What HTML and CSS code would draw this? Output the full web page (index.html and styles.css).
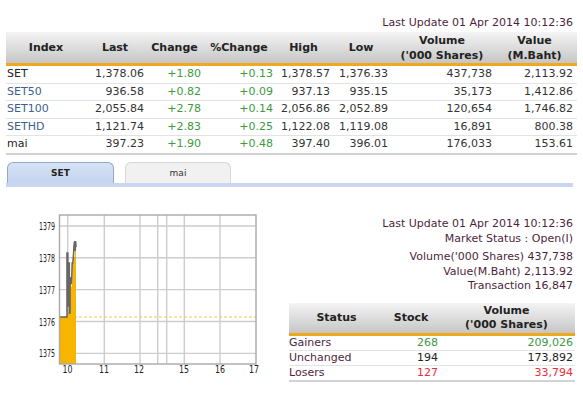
FILE: index.html
```html
<!DOCTYPE html>
<html>
<head>
<meta charset="utf-8">
<link rel="stylesheet" href="styles.css">
</head>
<body>
<div class="page">
  <div class="top">
    <div class="update">Last Update 01 Apr 2014 10:12:36</div>
    <table class="idx">
      <colgroup>
        <col class="c-index"><col class="c-last"><col class="c-chg"><col class="c-pchg"><col class="c-high"><col class="c-low"><col class="c-vol"><col class="c-val">
      </colgroup>
      <thead>
        <tr>
          <th>Index</th><th>Last</th><th>Change</th><th>%Change</th><th>High</th><th>Low</th><th>Volume<br>('000 Shares)</th><th>Value<br>(M.Baht)</th>
        </tr>
      </thead>
      <tbody>
        <tr><td class="name">SET</td><td>1,378.06</td><td class="up">+1.80</td><td class="up">+0.13</td><td>1,378.57</td><td>1,376.33</td><td>437,738</td><td>2,113.92</td></tr>
        <tr><td class="name link">SET50</td><td>936.58</td><td class="up">+0.82</td><td class="up">+0.09</td><td>937.13</td><td>935.15</td><td>35,173</td><td>1,412.86</td></tr>
        <tr><td class="name link">SET100</td><td>2,055.84</td><td class="up">+2.78</td><td class="up">+0.14</td><td>2,056.86</td><td>2,052.89</td><td>120,654</td><td>1,746.82</td></tr>
        <tr><td class="name link">SETHD</td><td>1,121.74</td><td class="up">+2.83</td><td class="up">+0.25</td><td>1,122.08</td><td>1,119.08</td><td>16,891</td><td>800.38</td></tr>
        <tr class="last"><td class="name">mai</td><td>397.23</td><td class="up">+1.90</td><td class="up">+0.48</td><td>397.40</td><td>396.01</td><td>176,033</td><td>153.61</td></tr>
      </tbody>
    </table>
  </div>

  <div class="tabs">
    <div class="tab active">SET</div>
    <div class="tab">mai</div>
  </div>
  <div class="tabbar"></div>

  <div class="lower">
    <svg class="chart" width="270" height="194" viewBox="6 186 270 194" xmlns="http://www.w3.org/2000/svg">
      <g stroke="#cdcdcd" stroke-width="1.4">
        <line x1="59" y1="225" x2="256" y2="225"/>
        <line x1="59" y1="256.7" x2="256" y2="256.7"/>
        <line x1="59" y1="288.6" x2="256" y2="288.6"/>
        <line x1="59" y1="320.5" x2="256" y2="320.5"/>
        <line x1="59" y1="352.4" x2="256" y2="352.4"/>
        <line x1="67.7" y1="214" x2="67.7" y2="363"/>
        <line x1="104.3" y1="214" x2="104.3" y2="363"/>
        <line x1="140" y1="214" x2="140" y2="363"/>
        <line x1="157.7" y1="214" x2="157.7" y2="363"/>
        <line x1="166.7" y1="214" x2="166.7" y2="363"/>
        <line x1="184.3" y1="214" x2="184.3" y2="363"/>
        <line x1="220" y1="214" x2="220" y2="363"/>
      </g>
      <line x1="59" y1="316" x2="256" y2="316" stroke="#f4c35a" stroke-width="1" stroke-dasharray="3 2"/>
      <path d="M59.5,363 L59.5,316 L68,316 L68,312 L70,312 L70,286 L71.6,286 L71.6,283 L72.6,283 L72.6,262 L74,262 L74,256 L75,256 L75,250 L76,250 L76,363 Z" fill="#f7b500"/>
      <polyline points="59.5,316 67,316 67,252 67.8,252 67.8,305 68.6,305 68.6,262 69.3,262 69.3,312 70,312 70,286 71,276 71.6,283 72.2,262 72.8,262 73.4,256 74,245 74.6,240 75.2,250 75.6,240 76,246" fill="none" stroke="#666" stroke-width="1.6"/>
      <rect x="59.5" y="214" width="196.5" height="149" fill="none" stroke="#a8a8a8" stroke-width="1.4"/>
      <g class="ax" text-anchor="end">
        <text x="55" y="229" textLength="16" lengthAdjust="spacingAndGlyphs">1379</text>
        <text x="55" y="260.5" textLength="16" lengthAdjust="spacingAndGlyphs">1378</text>
        <text x="55" y="292.5" textLength="16" lengthAdjust="spacingAndGlyphs">1377</text>
        <text x="55" y="324.5" textLength="16" lengthAdjust="spacingAndGlyphs">1376</text>
        <text x="55" y="356" textLength="16" lengthAdjust="spacingAndGlyphs">1375</text>
      </g>
      <g class="ax" text-anchor="middle">
        <text x="67.5" y="372" textLength="10" lengthAdjust="spacingAndGlyphs">10</text>
        <text x="104" y="372" textLength="10" lengthAdjust="spacingAndGlyphs">11</text>
        <text x="139" y="372" textLength="10" lengthAdjust="spacingAndGlyphs">12</text>
        <text x="184" y="372" textLength="10" lengthAdjust="spacingAndGlyphs">15</text>
        <text x="220" y="372" textLength="10" lengthAdjust="spacingAndGlyphs">16</text>
        <text x="254" y="372" textLength="10" lengthAdjust="spacingAndGlyphs">17</text>
      </g>
    </svg>

    <div class="side">
      <div class="info1">
        <div>Last Update 01 Apr 2014 10:12:36</div>
        <div>Market Status : Open(I)</div>
      </div>
      <div class="info2">
        <div>Volume('000 Shares) 437,738</div>
        <div>Value(M.Baht) 2,113.92</div>
        <div>Transaction 16,847</div>
      </div>
      <table class="stat">
        <colgroup><col class="s-status"><col class="s-stock"><col class="s-vol"></colgroup>
        <thead>
          <tr><th>Status</th><th>Stock</th><th>Volume<br>('000 Shares)</th></tr>
        </thead>
        <tbody>
          <tr><td class="lbl">Gainers</td><td class="up">268</td><td class="up">209,026</td></tr>
          <tr><td class="lbl">Unchanged</td><td class="flat">194</td><td class="flat">173,892</td></tr>
          <tr class="last"><td class="lbl">Losers</td><td class="down">127</td><td class="down">33,794</td></tr>
        </tbody>
      </table>
    </div>
  </div>
</div>
</body>
</html>
```

FILE: styles.css
```css
html, body {
  margin: 0;
  padding: 0;
  background: #fff;
}
body {
  font-family: "DejaVu Sans", Verdana, sans-serif;
  font-size: 11px;
  color: #333;
}
.page {
  width: 583px;
}
.top {
  padding: 0 6px;
}
.update {
  padding-top: 16px;
  height: 16px;
  line-height: 14px;
  text-align: right;
  padding-right: 4px;
  color: #4d1f3c;
}
table {
  border-collapse: separate;
  border-spacing: 0;
  table-layout: fixed;
}
.idx {
  width: 571px;
}
.c-index { width: 80px; }
.c-last { width: 62px; }
.c-chg { width: 57px; }
.c-pchg { width: 72px; }
.c-high { width: 57px; }
.c-low { width: 58px; }
.c-vol { width: 104px; }
.c-val { width: 81px; }

th {
  background: linear-gradient(#f4f4f4, #c6c6c6);
  border-bottom: 3px solid #f0a81c;
  font-weight: bold;
  color: #222;
  text-align: center;
  line-height: 15px;
  padding: 0 4px 0 0;
  white-space: nowrap;
}
.idx th {
  height: 31px;
}
.idx th:first-child {
  padding: 0;
}
td {
  padding: 0 4px 0 0;
  text-align: right;
  white-space: nowrap;
  color: #333;
}
.idx td {
  height: 16.5px;
  line-height: 16.5px;
  border-bottom: 1px solid #e3e3e3;
}
.idx tr.last td {
  border-bottom: 2px solid #d2d2d2;
}
td.name {
  text-align: left;
  padding: 0 0 0 1px;
  color: #222;
}
td.link {
  color: #3e5f8c;
}
td.up {
  color: #3d9a3d;
}
td.down {
  color: #ee2b3b;
}
td.flat {
  color: #222;
}

.tabs {
  display: flex;
  gap: 11px;
  margin-top: 7px;
  padding-left: 7px;
  height: 21px;
  align-items: flex-end;
}
.tab {
  box-sizing: border-box;
  width: 106px;
  height: 21px;
  border: 1px solid #d6d6d6;
  border-bottom: none;
  border-radius: 6px 6px 0 0;
  background: #f1f1f1;
  font-size: 9px;
  line-height: 20px;
  text-align: center;
  color: #333;
}
.tab.active {
  width: 107px;
  background: linear-gradient(#d6e2f5, #c4d4ef);
  border-color: #93a8cf;
  font-weight: bold;
  color: #222;
}
.tabbar {
  margin-left: 6px;
  width: 567px;
  height: 4px;
  background: #c8d6f0;
}

.lower {
  display: flex;
  align-items: flex-start;
  padding-left: 6px;
}
.chart {
  display: block;
  flex: none;
}
.ax {
  font-family: "DejaVu Sans", sans-serif;
  font-size: 10px;
  fill: #222;
}
.side {
  margin-left: 13px;
  width: 286px;
  padding-top: 29.5px;
  color: #4d1f3c;
}
.info1, .info2 {
  text-align: right;
  padding-right: 2px;
}
.info1 {
  line-height: 15px;
}
.info2 {
  margin-top: 4px;
  line-height: 14.5px;
}
.stat {
  margin-top: 9px;
  width: 286px;
}
.s-status { width: 95px; }
.s-stock { width: 56px; }
.s-vol { width: 135px; }
.stat th {
  height: 30px;
  line-height: 14px;
  padding: 0 2px 0 0;
}
.stat th:first-child {
  padding: 0;
}
.stat td {
  height: 14px;
  line-height: 14px;
  padding: 0 2px 0 0;
  border-bottom: 1px solid #e3e3e3;
}
.stat tr.last td {
  border-bottom: 2px solid #d2d2d2;
}
.stat td.lbl {
  text-align: left;
  padding: 0;
  color: #4d2740;
}
```
